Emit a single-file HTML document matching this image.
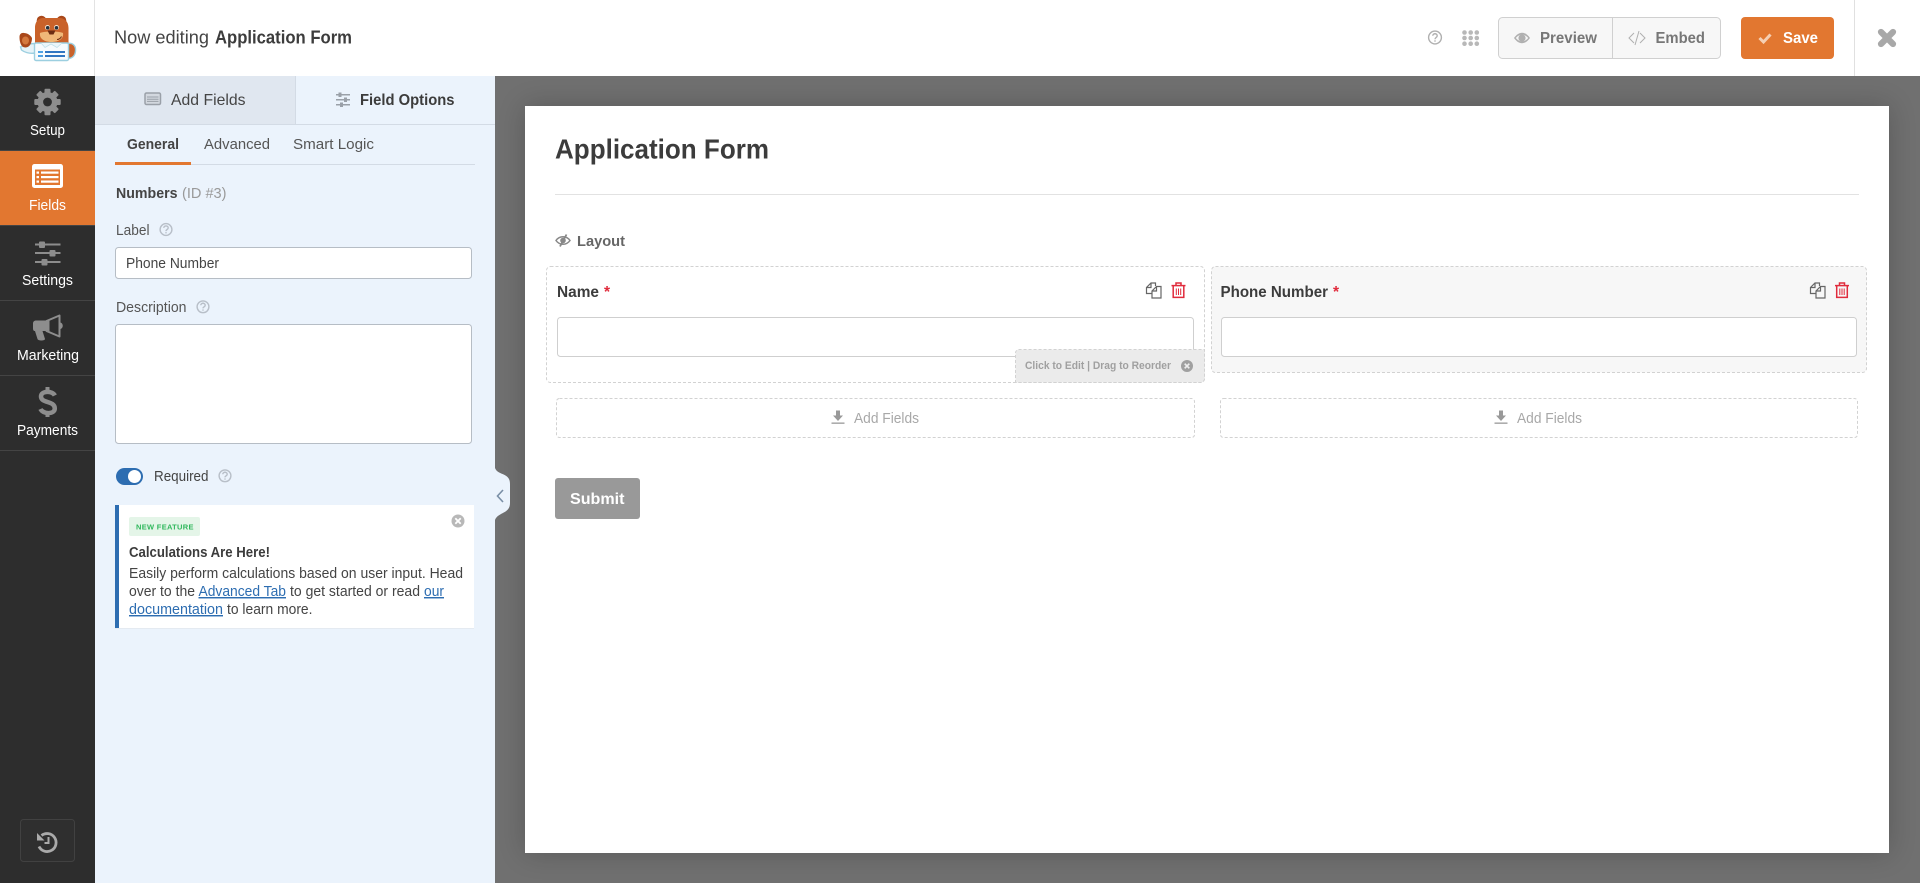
<!DOCTYPE html>
<html lang="en"><head><meta charset="utf-8"><title>Now editing Application Form</title>
<style>
html,body{margin:0;padding:0;width:1920px;height:883px;overflow:hidden;background:#6e6e6e}
svg{display:block}
text{font-family:"Liberation Sans",Arial,sans-serif}
.b{font-weight:700}
</style></head><body>
<svg xmlns="http://www.w3.org/2000/svg" width="1920" height="883" viewBox="0 0 1920 883">
<defs>
<filter id="sh" x="-10%" y="-10%" width="120%" height="120%"><feGaussianBlur stdDeviation="14"/></filter>
<g id="copy" fill="none" stroke="#666" stroke-width="1.200"><path d="M6 11.500H1V5.500L5.500 1H10V4"/><path d="M5.500 1V5.500H1"/><path d="M11 4.500H15.500V16H6.500V9Z"/><path d="M11 4.500V9H6.500"/></g>
<g id="trash" fill="none" stroke="#e02b3c" stroke-width="1.500"><path d="M0 3.600H14"/><path d="M4.500 3.500V1H9.500V3.500"/><path d="M1.700 4V15.400H12.300V4"/><path d="M4.800 6.500V13M7 6.500V13M9.200 6.500V13" stroke-width="1"/></g>
<g id="dl" fill="#999"><path d="M-2 -6H2V-1H5L0 4.500L-5 -1H-2Z"/><rect x="-6.500" y="6" width="13" height="1.300"/></g>
<g id="help" fill="none" stroke="#b8bfc8" stroke-width="1.400"><circle r="5.900"/><path d="M-2.200 -1.600C-2.200 -4.200 2.200 -4.200 2.200 -1.600C2.200 0 0 0 0 1.600"/><path d="M0 2.600V3.900"/></g>
</defs>

<!-- canvas -->
<rect x="495" y="76" width="1425" height="807" fill="#707070"/>
<rect x="525" y="106" width="1364" height="747" fill="#000" opacity=".2" filter="url(#sh)"/>
<rect x="525" y="106" width="1364" height="747" fill="#fff"/>

<!-- top bar -->
<rect width="1920" height="76" fill="#fff"/>
<rect x="94" y="0" width="1" height="76" fill="#e3e3e3"/>
<rect x="1854" y="0" width="1" height="76" fill="#e0e0e0"/>

<!-- logo -->
<g>
<path d="M20.500 47C24 45 29 43.500 35 43.500V53C29 54 24 52 21.500 50Z" fill="#e6f3f8" stroke="#9ccfe0" stroke-width="1.400"/>
<path d="M68 43.500C73 42.500 76 46 75.500 51C75 56 72 58.500 68 58.500Z" fill="#c9622a" stroke="#9ccfe0" stroke-width="1.400"/>
<path d="M19.500 37C19.500 34 21.500 32.500 24 33C27 33 30.500 35 32 38C32 43 29.500 47.500 25.500 47.500C21 47.500 19.500 42 19.500 37Z" fill="#a9481a"/>
<ellipse cx="25.500" cy="40.500" rx="3.500" ry="4" fill="#d4793e"/>
<circle cx="41.500" cy="20.500" r="4.800" fill="#a9481a"/><circle cx="61.500" cy="20.500" r="4.800" fill="#a9481a"/>
<path d="M35 28C35 20 40 17.500 45 18H58C64 17.500 68.500 21 68.500 28V45H35Z" fill="#c9622a"/>
<path d="M40 33C44 31 59 31 63 33C64 39 58 42 51.500 42C45 42 39 39 40 33Z" fill="#f0b878"/>
<circle cx="47.500" cy="27.500" r="2.500" fill="#f7e5d3"/><circle cx="56.500" cy="27.500" r="2.500" fill="#f7e5d3"/>
<circle cx="47.700" cy="27.800" r="1.800" fill="#23303d"/><circle cx="56.500" cy="27.800" r="1.800" fill="#23303d"/>
<path d="M47.500 30.500H55.500L53.500 34.500H49.500Z" fill="#6b2c12"/>
<path d="M57 39.500C59 39.500 60.500 38.500 61.500 36.500" fill="none" stroke="#6b2c12"/>
<rect x="34.500" y="43" width="34" height="17.500" rx="1.500" fill="#f6fbfd" stroke="#9ccfe0" stroke-width="1.400"/>
<path d="M41 43L45 47.500L51 44L57 47.500L62 43" fill="#eaf6fa" stroke="#bfe0ea" stroke-width=".8"/>
<rect x="38" y="51" width="5" height="2" fill="#4ea3e4"/><rect x="45" y="51" width="20" height="2" fill="#2f76c2"/>
<rect x="38" y="55" width="5" height="2" fill="#4ea3e4"/><rect x="45" y="55" width="20" height="2" fill="#2f76c2"/>
</g>

<text x="114" y="43.500" font-size="18" fill="#444" textLength="95" lengthAdjust="spacingAndGlyphs">Now editing</text>
<text x="215" y="43.500" font-size="18" class="b" fill="#3c3c3c" textLength="137" lengthAdjust="spacingAndGlyphs">Application Form</text>

<!-- top right -->
<g fill="none" stroke="#b0b0b0" stroke-width="1.400" transform="translate(1435 37.500)"><circle r="6.400"/><path d="M-2.200 -1.800C-2.200 -4.400 2.200 -4.400 2.200 -1.800C2.200 0 0 0 0 1.800"/><path d="M0 2.800V4.200"/></g>
<g fill="#b8b8b8"><circle cx="1464.500" cy="32.500" r="2.300"/><circle cx="1470.700" cy="32.500" r="2.300"/><circle cx="1476.800" cy="32.500" r="2.300"/><circle cx="1464.500" cy="38" r="2.300"/><circle cx="1470.700" cy="38" r="2.300"/><circle cx="1476.800" cy="38" r="2.300"/><circle cx="1464.500" cy="43.700" r="2.300"/><circle cx="1470.700" cy="43.700" r="2.300"/><circle cx="1476.800" cy="43.700" r="2.300"/></g>
<rect x="1498.500" y="17.500" width="222" height="41" rx="4" fill="#f7f7f7" stroke="#d0d0d0"/>
<rect x="1612" y="18" width="1" height="40" fill="#d0d0d0"/>
<path d="M1514 38C1519 31 1525 31 1530 38C1525 45 1519 45 1514 38Z" fill="#b0b0b0"/>
<path d="M1515.800 38C1519.500 33.500 1524.500 33.500 1528.200 38C1524.500 42.500 1519.500 42.500 1515.800 38Z" fill="#f7f7f7"/>
<circle cx="1522" cy="38" r="3.600" fill="#b0b0b0"/>
<text x="1540" y="43" font-size="15.500" class="b" fill="#777" textLength="57" lengthAdjust="spacingAndGlyphs">Preview</text>
<path d="M1634 33L1629 38L1634 43M1640 33L1645 38L1640 43M1639 31L1635 45" fill="none" stroke="#b0b0b0" stroke-width="1"/>
<text x="1655.500" y="43" font-size="15.500" class="b" fill="#777" textLength="49.500" lengthAdjust="spacingAndGlyphs">Embed</text>
<rect x="1741" y="17" width="93" height="42" rx="4" fill="#e27730"/>
<path d="M1759.500 38L1763.500 42L1770.500 34.500" fill="none" stroke="#f5cfb3" stroke-width="3"/>
<text x="1783" y="43" font-size="15.500" class="b" fill="#fff" textLength="35" lengthAdjust="spacingAndGlyphs">Save</text>
<path d="M1881 32L1893 44M1893 32L1881 44" stroke="#a8a8a8" stroke-width="6.200" stroke-linecap="round"/>

<!-- sidebar -->
<rect x="0" y="76" width="95" height="807" fill="#2d2d2d"/>
<rect x="0" y="151" width="95" height="74" fill="#e27730"/>
<rect x="0" y="150" width="95" height="1" fill="#444"/><rect x="0" y="225" width="95" height="1" fill="#444"/><rect x="0" y="300" width="95" height="1" fill="#444"/><rect x="0" y="375" width="95" height="1" fill="#444"/><rect x="0" y="450" width="95" height="1" fill="#444"/>

<g transform="translate(47.500 102)" fill="#8d8d8d">
<circle r="10"/>
<rect x="-3" y="-13.200" width="6" height="26.400" rx="1"/>
<rect x="-3" y="-13.200" width="6" height="26.400" rx="1" transform="rotate(45)"/>
<rect x="-3" y="-13.200" width="6" height="26.400" rx="1" transform="rotate(90)"/>
<rect x="-3" y="-13.200" width="6" height="26.400" rx="1" transform="rotate(135)"/>
<circle r="4.400" fill="#2d2d2d"/>
</g>
<text x="30" y="135" font-size="14.500" fill="#fff" textLength="35" lengthAdjust="spacingAndGlyphs">Setup</text>

<rect x="32" y="164" width="31" height="24" rx="2.500" fill="#fff"/>
<rect x="35" y="169.500" width="25" height="15.500" fill="#e27730"/>
<g fill="#fff"><rect x="36.500" y="171.500" width="2.500" height="2.200"/><rect x="41" y="171.500" width="17.500" height="2.200"/><rect x="36.500" y="176" width="2.500" height="2.200"/><rect x="41" y="176" width="17.500" height="2.200"/><rect x="36.500" y="180.500" width="2.500" height="2.200"/><rect x="41" y="180.500" width="17.500" height="2.200"/></g>
<text x="29" y="210" font-size="14.500" fill="#fff" textLength="37" lengthAdjust="spacingAndGlyphs">Fields</text>

<g fill="#8d8d8d"><rect x="35" y="243.500" width="25.500" height="2"/><rect x="39" y="241.500" width="6" height="6.500" rx="1"/><rect x="35" y="252" width="25.500" height="2"/><rect x="49.500" y="250" width="6" height="6.500" rx="1"/><rect x="35" y="261" width="25.500" height="2"/><rect x="41.500" y="259" width="6" height="6.500" rx="1"/></g>
<text x="22" y="285" font-size="14.500" fill="#fff" textLength="51" lengthAdjust="spacingAndGlyphs">Settings</text>

<path d="M33 323.500C33 321.500 34.500 320.500 36 320.500H46L46 331H42.500L45 339C45 341 38 341 37.500 339L35 331C33.500 331 33 330 33 328Z" fill="#8d8d8d"/>
<path d="M46.500 321L59.500 315.500V336.500L46.500 331Z" fill="#2d2d2d" stroke="#8d8d8d" stroke-width="2" stroke-linejoin="round"/>
<path d="M46.500 321L49.500 320V332L46.500 331Z" fill="#8d8d8d"/>
<path d="M60.500 322.500C63.500 323.500 63.500 328 60.500 329Z" fill="#8d8d8d"/>
<text x="17" y="360" font-size="14.500" fill="#fff" textLength="62" lengthAdjust="spacingAndGlyphs">Marketing</text>

<path d="M54.800 395.500C52.500 390.500 41 390.500 41 396.500C41 403.500 54.800 400.500 54.800 408.500C54.800 414.500 43 414.500 40.500 409" fill="none" stroke="#8d8d8d" stroke-width="4.500"/>
<rect x="45.500" y="387" width="4" height="5" fill="#8d8d8d"/><rect x="45.500" y="412" width="4" height="5" fill="#8d8d8d"/>
<text x="17" y="435" font-size="14.500" fill="#fff" textLength="61" lengthAdjust="spacingAndGlyphs">Payments</text>

<rect x="20.500" y="819.500" width="54" height="42" rx="3" fill="#2f2f2f" stroke="#414141"/>
<path d="M41.500 835.500A9 9 0 1 1 39 846.500" fill="none" stroke="#aaa" stroke-width="2.800"/>
<path d="M37 833V840.500H44.500Z" fill="#aaa"/>
<path d="M48.500 837V843H44.500" fill="none" stroke="#aaa" stroke-width="2"/>

<!-- panel -->
<rect x="95" y="76" width="400" height="807" fill="#ebf3fc"/>
<rect x="95" y="76" width="200" height="48" fill="#e0e7f0"/>
<rect x="295" y="76" width="1" height="48" fill="#d3dbe5"/>
<rect x="95" y="124" width="400" height="1" fill="#d3dbe5"/>
<path d="M495 468C498 476 510 472 510 484V503C510 514 498 512 495 520Z" fill="#ebf3fc"/>
<path d="M503 490L497.500 496L503 502" fill="none" stroke="#7a8fa6" stroke-width="1.600"/>

<rect x="145" y="93" width="15.500" height="11.500" rx="1.500" fill="#d3d8df" stroke="#9aa0a8" stroke-width="1.500"/>
<path d="M147 97H158.500M147 99.200H158.500M147 101.400H158.500" stroke="#9aa0a8" stroke-width="1"/>
<text x="171" y="105" font-size="16" fill="#444" textLength="74.500" lengthAdjust="spacingAndGlyphs">Add Fields</text>
<g fill="#9aa0a8"><rect x="336" y="94" width="14" height="1.500"/><rect x="338.500" y="92.500" width="3" height="4.500"/><rect x="336" y="99" width="14" height="1.500"/><rect x="344" y="97.500" width="3" height="4.500"/><rect x="336" y="104" width="14" height="1.500"/><rect x="340" y="102.500" width="3" height="4.500"/></g>
<text x="360" y="105" font-size="16" class="b" fill="#3c3c3c" textLength="94.500" lengthAdjust="spacingAndGlyphs">Field Options</text>

<text x="127" y="149" font-size="15" class="b" fill="#444" textLength="52" lengthAdjust="spacingAndGlyphs">General</text>
<text x="204" y="149" font-size="15" fill="#555" textLength="66" lengthAdjust="spacingAndGlyphs">Advanced</text>
<text x="293" y="149" font-size="15" fill="#555" textLength="81" lengthAdjust="spacingAndGlyphs">Smart Logic</text>
<rect x="115" y="164" width="360" height="1" fill="#d3dbe5"/>
<rect x="115" y="162" width="76" height="3" fill="#e27730"/>

<text x="116" y="198" font-size="15" class="b" fill="#444" textLength="61.500" lengthAdjust="spacingAndGlyphs">Numbers</text>
<text x="182" y="198" font-size="15" fill="#999" textLength="44.500" lengthAdjust="spacingAndGlyphs">(ID #3)</text>
<text x="116" y="235" font-size="15" fill="#555" textLength="33.500" lengthAdjust="spacingAndGlyphs">Label</text>
<use href="#help" transform="translate(166 229.500)"/>
<rect x="115.500" y="247.500" width="356" height="31" rx="3" fill="#fff" stroke="#b6bdc5"/>
<text x="126" y="268" font-size="15" fill="#444" textLength="93" lengthAdjust="spacingAndGlyphs">Phone Number</text>
<text x="116" y="312" font-size="15" fill="#555" textLength="70.500" lengthAdjust="spacingAndGlyphs">Description</text>
<use href="#help" transform="translate(203 306.800)"/>
<rect x="115.500" y="324.500" width="356" height="119" rx="3" fill="#fff" stroke="#b6bdc5"/>
<rect x="116" y="468" width="27" height="17" rx="8.500" fill="#2d6db1"/>
<circle cx="134.500" cy="476.500" r="6.500" fill="#fff"/>
<text x="154" y="481" font-size="15" fill="#444" textLength="54.500" lengthAdjust="spacingAndGlyphs">Required</text>
<use href="#help" transform="translate(225 475.800)"/>

<rect x="115" y="505" width="359" height="123" fill="#fff"/>
<rect x="115" y="628" width="359" height="1" fill="#e4eaf1"/>
<rect x="115" y="505" width="4" height="123" fill="#2d6db1"/>
<rect x="129" y="517" width="71" height="19" rx="2" fill="#e4f5e8"/>
<text x="136" y="529.500" font-size="7.500" class="b" fill="#30b85c" textLength="57.500" lengthAdjust="spacing">NEW FEATURE</text>
<circle cx="458" cy="521" r="6.500" fill="#b8b8b8"/><path d="M455.300 518.300L460.700 523.700M460.700 518.300L455.300 523.700" stroke="#fff" stroke-width="1.800"/>
<text x="129" y="557" font-size="14.500" class="b" fill="#3c3c3c" textLength="141" lengthAdjust="spacingAndGlyphs">Calculations Are Here!</text>
<text x="129" y="578" font-size="14.500" fill="#444" textLength="334" lengthAdjust="spacingAndGlyphs">Easily perform calculations based on user input. Head</text>
<text x="129" y="596" font-size="14.500" fill="#444" textLength="66" lengthAdjust="spacingAndGlyphs">over to the</text>
<text x="198.500" y="596" font-size="14.500" fill="#2d6db1" text-decoration="underline" textLength="87.500" lengthAdjust="spacingAndGlyphs">Advanced Tab</text>
<text x="290" y="596" font-size="14.500" fill="#444" textLength="130" lengthAdjust="spacingAndGlyphs">to get started or read</text>
<text x="424" y="596" font-size="14.500" fill="#2d6db1" text-decoration="underline" textLength="20" lengthAdjust="spacingAndGlyphs">our</text>
<text x="129" y="614" font-size="14.500" fill="#2d6db1" text-decoration="underline" textLength="94" lengthAdjust="spacingAndGlyphs">documentation</text>
<text x="227" y="614" font-size="14.500" fill="#444" textLength="85.500" lengthAdjust="spacingAndGlyphs">to learn more.</text>

<!-- form -->
<text x="555" y="158.500" font-size="28" class="b" fill="#3c3c3c" textLength="214" lengthAdjust="spacingAndGlyphs">Application Form</text>
<rect x="555" y="194" width="1304" height="1" fill="#e2e2e2"/>
<g transform="translate(563 240.500)"><path d="M-7 0C-3.500 -5 3.500 -5 7 0C3.500 5 -3.500 5 -7 0Z" fill="none" stroke="#888" stroke-width="1.500"/><circle r="2.800" fill="#888"/><path d="M3.500 -6L-3 6" stroke="#888" stroke-width="1.800"/></g>
<text x="577" y="246" font-size="15" class="b" fill="#666" textLength="48" lengthAdjust="spacingAndGlyphs">Layout</text>

<rect x="546.500" y="266.500" width="658" height="116" rx="4" fill="#fff" stroke="#d2d2d2" stroke-dasharray="3 2"/>
<text x="557" y="297" font-size="15.500" class="b" fill="#3c3c3c" textLength="42" lengthAdjust="spacingAndGlyphs">Name</text>
<text x="604" y="297" font-size="15.500" class="b" fill="#e02b3c">*</text>
<use href="#copy" x="1145.500" y="282"/>
<use href="#trash" x="1171.500" y="282"/>
<rect x="557.500" y="317.500" width="636" height="39" rx="3" fill="#fff" stroke="#cfcfcf"/>
<path d="M1015.500 383V353A3.500 3.500 0 0 1 1019 349.500H1204.500V379A4 4 0 0 1 1200.500 382.500H1015.500Z" fill="#ebebeb" stroke="#d2d2d2" stroke-dasharray="3 2"/>
<text x="1025" y="369" font-size="11" class="b" fill="#a0a0a0" textLength="146" lengthAdjust="spacingAndGlyphs">Click to Edit | Drag to Reorder</text>
<circle cx="1187" cy="366" r="6" fill="#a0a0a0"/><path d="M1184.700 363.700L1189.300 368.300M1189.300 363.700L1184.700 368.300" stroke="#eee" stroke-width="1.700"/>

<rect x="1211.500" y="266.500" width="655" height="106" rx="4" fill="#f7f7f7" stroke="#d2d2d2" stroke-dasharray="3 2"/>
<text x="1220.500" y="297" font-size="15.500" class="b" fill="#3c3c3c" textLength="107.500" lengthAdjust="spacingAndGlyphs">Phone Number</text>
<text x="1333" y="297" font-size="15.500" class="b" fill="#e02b3c">*</text>
<use href="#copy" x="1809.500" y="282"/>
<use href="#trash" x="1835" y="282"/>
<rect x="1221.500" y="317.500" width="635" height="39" rx="3" fill="#fff" stroke="#cfcfcf"/>

<rect x="556.500" y="398.500" width="638" height="39" rx="3" fill="#fff" stroke="#d2d2d2" stroke-dasharray="3 2"/>
<use href="#dl" x="838" y="416.500"/>
<text x="854" y="423" font-size="15" fill="#a8a8a8" textLength="65" lengthAdjust="spacingAndGlyphs">Add Fields</text>
<rect x="1220.500" y="398.500" width="637" height="39" rx="3" fill="#fff" stroke="#d2d2d2" stroke-dasharray="3 2"/>
<use href="#dl" x="1501" y="416.500"/>
<text x="1517" y="423" font-size="15" fill="#a8a8a8" textLength="65" lengthAdjust="spacingAndGlyphs">Add Fields</text>

<rect x="555" y="478" width="85" height="41" rx="3" fill="#999"/>
<text x="570" y="504" font-size="16" class="b" fill="#fff" textLength="54.500" lengthAdjust="spacingAndGlyphs">Submit</text>
</svg>
</body></html>
